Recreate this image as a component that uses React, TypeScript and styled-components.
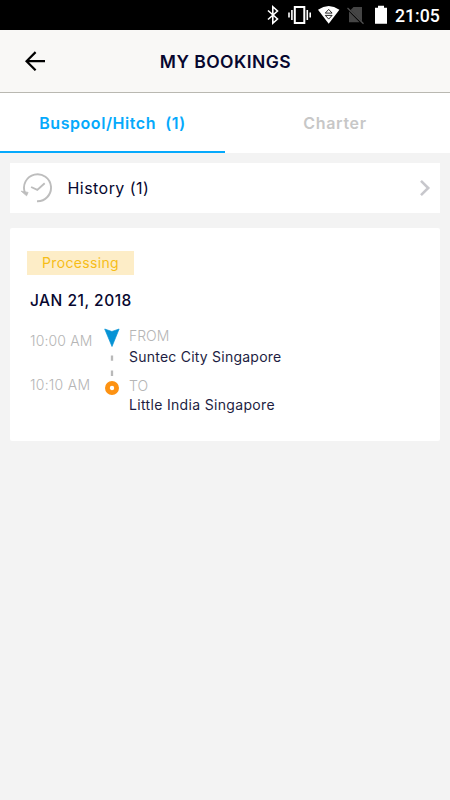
import React from "react";
import styled, { createGlobalStyle } from "styled-components";

const Global = createGlobalStyle`
  *, *::before, *::after { box-sizing: border-box; }
  body { margin: 0; background: #f3f3f3; }
`;

const Screen = styled.div`
  width: 450px;
  height: 800px;
  display: flex;
  flex-direction: column;
  overflow: hidden;
  background: #f3f3f3;
  color: #07072f;
  font-family: Inter, "Liberation Sans", sans-serif;
`;

const Label = styled.span<{ $size: number; $weight?: number; $spacing?: number; $color?: string; $line?: number }>`
  display: block;
  margin: 0;
  white-space: pre;
  font-size: ${(p) => p.$size}px;
  font-weight: ${(p) => p.$weight ?? 400};
  letter-spacing: ${(p) => p.$spacing ?? 0}px;
  line-height: ${(p) => p.$line ?? 20}px;
  color: ${(p) => p.$color ?? "#07072f"};
`;

const StatusBar = styled.div`
  flex: none;
  height: 30px;
  padding-right: 10px;
  display: flex;
  align-items: center;
  justify-content: flex-end;
  background: #000;
`;

const Clock = styled.time`
  width: 45px;
  margin-left: 7px;
  padding-top: 2px;
  color: #fff;
  font: 500 17.7px/28px Roboto, sans-serif;
  white-space: nowrap;
`;

const Header = styled.header`
  flex: none;
  height: 63px;
  padding-top: 1px;
  display: grid;
  grid-template-columns: 70px 1fr 69px;
  align-items: center;
  justify-items: center;
  background: #f9f8f6;
  border-bottom: 1px solid #b9b8b1;
`;

const IconButton = styled.button`
  display: flex;
  padding: 0 0 2px;
  border: 0;
  background: none;
`;

const Tabs = styled.nav`
  flex: none;
  height: 60px;
  display: grid;
  grid-template-columns: 1fr 1fr;
  background: #fff;
`;

const Tab = styled.div<{ $active?: boolean }>`
  display: flex;
  align-items: center;
  justify-content: center;
  padding-top: ${(p) => (p.$active ? 2 : 0)}px;
  padding-right: ${(p) => (p.$active ? 0 : 5)}px;
  padding-bottom: 1px;
  border-bottom: ${(p) => (p.$active ? "2px solid #05a9fc" : "0")};
`;

const Content = styled.main`
  display: flex;
  flex-direction: column;
  gap: 15px;
  padding: 10px;
`;

const HistoryRow = styled.div`
  height: 50px;
  display: grid;
  grid-template-columns: 47.5px 1fr 20px;
  align-items: center;
  padding: 0 5px 0 10px;
  background: #fff;
`;

const Card = styled.article`
  height: 213px;
  padding: 23px 17px;
  background: #fff;
  border-radius: 2px;
`;

const Badge = styled.div`
  width: 107px;
  height: 24px;
  display: flex;
  align-items: center;
  justify-content: center;
  background: #fdedc7;
`;

const DateLine = styled.div`
  padding: 16px 0 0 3px;
`;

const Trip = styled.div`
  display: grid;
  grid-template-columns: 74px 28px 1fr;
  padding: 13px 0 0 3px;
`;

const Times = styled.div`
  display: flex;
  flex-direction: column;
  gap: 24px;
  padding-top: 7px;
`;

const Route = styled.div`
  padding-top: 4px;
`;

const Stops = styled.div`
  display: flex;
  flex-direction: column;
  gap: 9px;
  padding-top: 2px;
  margin-left: -3px;
`;

const Stop = styled.div<{ $gap: number }>`
  display: flex;
  flex-direction: column;
  row-gap: ${(p) => p.$gap}px;
`;

const StatusIcons = () => (
  <svg width="122" height="30" viewBox="266 0 122 30" fill="none">
    <path d="M268 10.5l9.5 8.5-4.7 4.3V6.7l4.7 4.3-9.5 8.5" stroke="#fff" strokeWidth="1.6" />
    <path d="M294.8 7h9.5v16h-9.5z" stroke="#fff" strokeWidth="2" />
    <path d="M291.9 10v10M307.3 10v10M289 12.5v5M310.2 12.5v5" stroke="#fff" strokeWidth="1.6" />
    <path d="M318 9.7Q328.7 2.5 339.4 9.7L328.7 23.8z" fill="#fff" />
    <path d="M325.3 13.1l3.4-3.7 3.4 3.7zM325.3 15.4l3.4 3.7 3.4-3.7z" stroke="#111" strokeWidth=".9" />
    <path d="M353.5 7h8.5v14.6L350.6 10z" fill="#454545" />
    <path d="M349 11.6l10.6 10.7H349z" fill="#454545" />
    <path d="M347.5 8l16 15.8" stroke="#505050" strokeWidth="1.3" />
    <path d="M378 5.7h6v2h3v16h-12v-16h3z" fill="#fff" />
  </svg>
);

const BackIcon = () => (
  <svg width="20" height="20" viewBox="0 0 20 20" fill="none" stroke="#000" strokeWidth="2.2">
    <path d="M20 10.2H2M10.6 1.1L1.5 10.2l9.1 9.1" />
  </svg>
);

const HistoryIcon = () => (
  <svg width="32" height="30" viewBox="0 0 32 30" fill="none" stroke="#bdbdbd" strokeWidth="1.9">
    <path d="M4.9 19.5A13.5 13.5 0 1 1 17 28.2" />
    <path d="M11.1 14l6.2 2.9 7.4-6.7" />
    <path d="M1.2 18.2l6.9 1.2-1.5 3.4z" fill="#bdbdbd" strokeWidth=".8" />
  </svg>
);

const ChevronIcon = () => (
  <svg width="20" height="20" viewBox="0 0 20 20" fill="none" stroke="#c7c7cc" strokeWidth="2.6">
    <path d="M6 2.9l7.2 7.1L6 17.1" />
  </svg>
);

const RouteIcon = () => (
  <svg width="16" height="70" viewBox="0 0 16 70" fill="none">
    <path d="M.7 1l7.2 2.5L15.1 1 8 18.5z" fill="#0793d5" stroke="#0793d5" strokeWidth=".7" strokeLinejoin="round" />
    <path d="M8 27.5v5.2M8 42.5V48" stroke="#b9b9b9" strokeWidth="2.3" />
    <circle cx="8" cy="60" r="4.6" stroke="#fd9212" strokeWidth="4.8" />
  </svg>
);

export default function App() {
  return (
    <Screen>
      <Global />
      <StatusBar>
        <StatusIcons />
        <Clock>21:05</Clock>
      </StatusBar>
      <Header>
        <IconButton aria-label="Back"><BackIcon /></IconButton>
        <Label as="h1" $size={17.5} $weight={600} $spacing={0.45} $line={21}>MY BOOKINGS</Label>
      </Header>
      <Tabs>
        <Tab $active><Label $size={16} $weight={600} $spacing={0.55} $color="#05a9fc">{"Buspool/Hitch  (1)"}</Label></Tab>
        <Tab><Label $size={16} $weight={600} $spacing={0.7} $color="#c7c7c7">Charter</Label></Tab>
      </Tabs>
      <Content>
        <HistoryRow>
          <HistoryIcon />
          <Label $size={16} $spacing={0.45}>History (1)</Label>
          <ChevronIcon />
        </HistoryRow>
        <Card>
          <Badge><Label $size={14} $spacing={0.35} $color="#f6bd18">Processing</Label></Badge>
          <DateLine><Label $size={15.5} $weight={500} $spacing={0.5}>JAN 21, 2018</Label></DateLine>
          <Trip>
            <Times>
              <Label $size={14} $weight={300} $spacing={0.15} $color="#b5b5b5">10:00 AM</Label>
              <Label $size={14} $weight={300} $spacing={0.25} $color="#b5b5b5">10:10 AM</Label>
            </Times>
            <Route><RouteIcon /></Route>
            <Stops>
              <Stop $gap={1}>
                <Label $size={14} $weight={300} $color="#b5b5b5">FROM</Label>
                <Label $size={14} $spacing={0.23} $color="#1d1d42">Suntec City Singapore</Label>
              </Stop>
              <Stop $gap={-1}>
                <Label $size={14} $weight={300} $line={19} $color="#b5b5b5">TO</Label>
                <Label $size={14} $line={19} $spacing={0.33} $color="#1d1d42">Little India Singapore</Label>
              </Stop>
            </Stops>
          </Trip>
        </Card>
      </Content>
    </Screen>
  );
}
